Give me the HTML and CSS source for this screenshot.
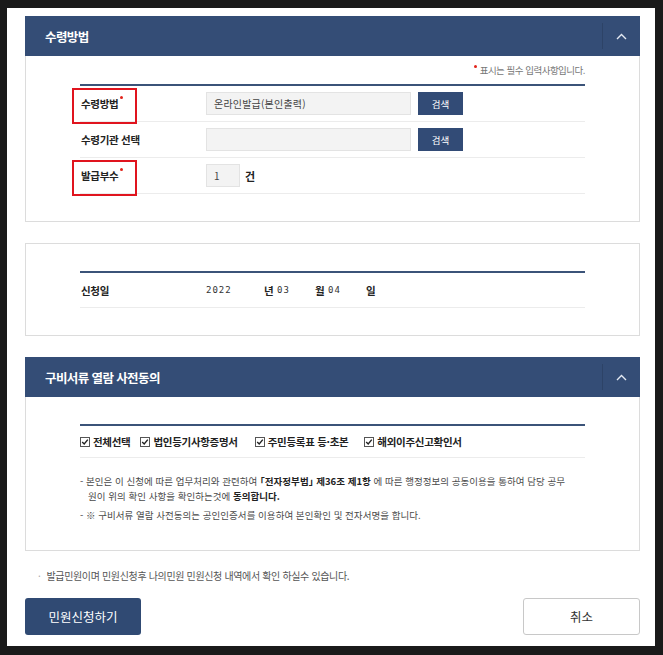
FILE: index.html
```html
<!DOCTYPE html>
<html lang="ko">
<head>
<meta charset="utf-8">
<title>민원신청</title>
<link rel="stylesheet" href="styles.css">
</head>
<body>
<div class="window">
  <section class="panel">
    <div class="panel-head">
      <h2 class="panel-title">수령방법</h2>
      <button class="toggle" type="button" aria-label="접기">
        <svg width="11" height="7" viewBox="0 0 11 7"><path d="M1 6 L5.5 1.5 L10 6" fill="none" stroke="#e4eaf3" stroke-width="1.4"/></svg>
      </button>
    </div>
    <div class="panel-body">
      <p class="req-note"><span class="dot"></span>표시는 필수 입력사항입니다.</p>
      <div class="table">
        <div class="row">
          <div class="row-label marked">수령방법<span class="dot"></span></div>
          <div class="field">온라인발급(본인출력)</div>
          <button class="btn-search" type="button">검색</button>
        </div>
        <div class="row">
          <div class="row-label">수령기관 선택</div>
          <div class="field"></div>
          <button class="btn-search" type="button">검색</button>
        </div>
        <div class="row">
          <div class="row-label marked">발급부수<span class="dot"></span></div>
          <div class="field small">1</div>
          <span class="unit">건</span>
        </div>
      </div>
    </div>
  </section>

  <section class="panel plain">
    <div class="panel-body date-body">
      <div class="table">
        <div class="row date-row">
          <div class="row-label">신청일</div>
          <span class="num year">2022</span><span class="du">년</span><span class="num">03</span><span class="du">월</span><span class="num">04</span><span class="du">일</span>
        </div>
      </div>
    </div>
  </section>

  <section class="panel">
    <div class="panel-head">
      <h2 class="panel-title">구비서류 열람 사전동의</h2>
      <button class="toggle" type="button" aria-label="접기">
        <svg width="11" height="7" viewBox="0 0 11 7"><path d="M1 6 L5.5 1.5 L10 6" fill="none" stroke="#e4eaf3" stroke-width="1.4"/></svg>
      </button>
    </div>
    <div class="panel-body consent-body">
      <div class="table">
        <div class="row checks">
          <label class="chk c1"><svg width="10" height="10" viewBox="0 0 10 10"><rect x="0.5" y="0.5" width="9" height="9" fill="#fff" stroke="#555"/><path d="M2.2 5 L4.2 7 L7.8 2.6" fill="none" stroke="#222" stroke-width="1.4"/></svg>전체선택</label>
          <label class="chk c2"><svg width="10" height="10" viewBox="0 0 10 10"><rect x="0.5" y="0.5" width="9" height="9" fill="#fff" stroke="#555"/><path d="M2.2 5 L4.2 7 L7.8 2.6" fill="none" stroke="#222" stroke-width="1.4"/></svg>법인등기사항증명서</label>
          <label class="chk c3"><svg width="10" height="10" viewBox="0 0 10 10"><rect x="0.5" y="0.5" width="9" height="9" fill="#fff" stroke="#555"/><path d="M2.2 5 L4.2 7 L7.8 2.6" fill="none" stroke="#222" stroke-width="1.4"/></svg>주민등록표 등·초본</label>
          <label class="chk c4"><svg width="10" height="10" viewBox="0 0 10 10"><rect x="0.5" y="0.5" width="9" height="9" fill="#fff" stroke="#555"/><path d="M2.2 5 L4.2 7 L7.8 2.6" fill="none" stroke="#222" stroke-width="1.4"/></svg>해외이주신고확인서</label>
        </div>
      </div>
      <ul class="notice">
        <li>- 본인은 이 신청에 따른 업무처리와 관련하여 <b>「전자정부법」 제36조 제1항</b> 에 따른 행정정보의 공동이용을 통하여 담당 공무<br>원이 위의 확인 사항을 확인하는것에 <b>동의합니다.</b></li>
        <li>- ※ 구비서류 열람 사전동의는 공인인증서를 이용하여 본인확인 및 전자서명을 합니다.</li>
      </ul>
    </div>
  </section>

  <p class="foot-note"><span class="bullet">·</span>발급민원이며 민원신청후 나의민원 민원신청 내역에서 확인 하실수 있습니다.</p>

  <div class="actions">
    <button class="btn-primary" type="button">민원신청하기</button>
    <button class="btn-cancel" type="button">취소</button>
  </div>
</div>
</body>
</html>
```
FILE: styles.css
```css
* { box-sizing: border-box; }
html, body { margin: 0; padding: 0; }
body {
  background: #1a1a1a;
  font-family: "Noto Sans CJK KR", "Noto Sans", sans-serif;
  color: #333;
}
.window {
  margin: 8px 8px 9px 7px;
  height: 638px;
  background: #fff;
  padding: 8px 15px 0 18px;
}
.panel + .panel { margin-top: 21px; }
.panel-head {
  height: 40px;
  background: #344d76;
  display: flex;
  align-items: center;
  justify-content: space-between;
}
.panel-title {
  margin: 0 0 0 20px;
  color: #fff;
  font-size: 12.5px;
  font-weight: 700;
  letter-spacing: -0.6px;
}
.toggle {
  width: 38px;
  height: 26px;
  border: 0;
  border-left: 1px solid rgba(0, 0, 0, 0.12);
  background: transparent;
  padding: 0;
  display: flex;
  align-items: center;
  justify-content: center;
}
.panel-body {
  border: 1px solid #dcdcdc;
  border-top: 0;
  padding: 0 54px 27px;
}
.plain .panel-body { border-top: 1px solid #dcdcdc; }
.req-note {
  margin: 0;
  height: 28px;
  display: flex;
  align-items: center;
  justify-content: flex-end;
  font-size: 9.5px;
  letter-spacing: -0.5px;
  color: #777;
}
.req-note .dot { margin-right: 3px; top: -4px; }
.dot {
  display: inline-block;
  width: 3px;
  height: 3px;
  border-radius: 50%;
  background: #e2231a;
  position: relative;
  top: -6px;
  margin-left: 2px;
}
.table { border-top: 2px solid #3b5379; }
.row {
  height: 36px;
  display: flex;
  align-items: center;
  border-bottom: 1px solid #ececec;
}
.row-label {
  width: 126px;
  flex: none;
  padding-left: 1px;
  font-size: 10.5px;
  font-weight: 700;
  letter-spacing: -0.3px;
  color: #222;
  position: relative;
  height: 100%;
  display: flex;
  align-items: center;
}
.row-label.marked::after {
  content: "";
  position: absolute;
  left: -8px;
  top: 2px;
  width: 61px;
  height: 32px;
  border: 2px solid #e0141e;
}
.field {
  width: 205px;
  height: 23px;
  background: #f3f3f3;
  border: 1px solid #e3e3e3;
  padding-left: 7px;
  display: flex;
  align-items: center;
  font-size: 10px;
  color: #444;
  letter-spacing: 0.2px;
}
.field.small { width: 34px; }
.unit {
  margin-left: 5px;
  font-size: 11px;
  font-weight: 700;
  color: #222;
}
.btn-search {
  margin-left: 7px;
  width: 45px;
  height: 23px;
  border: 0;
  background: #324b76;
  color: #fff;
  font-family: inherit;
  font-size: 9.5px;
  padding: 0;
}
.date-body { padding-top: 27px; }
.date-row { height: 35px; }
.num {
  font-family: "DejaVu Sans Mono", monospace;
  font-size: 9px;
  letter-spacing: 1px;
  color: #333;
  width: 38px;
}
.num.year { width: 58px; }
.du {
  width: 13px;
  font-size: 10.5px;
  font-weight: 700;
  color: #222;
}
.consent-body { padding-top: 27px; padding-bottom: 27px; }
.checks { height: 32px; }
.chk {
  display: flex;
  align-items: center;
  font-size: 10.5px;
  font-weight: 700;
  letter-spacing: -0.3px;
  color: #222;
}
.chk svg { margin-right: 3px; flex: none; }
.c1 { margin-right: 10px; }
.c2 { margin-right: 17px; }
.c3 { margin-right: 16px; }
.notice {
  list-style: none;
  margin: 16px 0 0;
  padding: 0;
  font-size: 9.5px;
  letter-spacing: 0.03px;
  color: #4a4a4a;
  line-height: 15px;
}
.notice li {
  padding-left: 8px;
  text-indent: -8px;
}
.notice li + li { margin-top: 4px; }
.notice b { color: #222; font-feature-settings: "halt"; }
.foot-note {
  margin: 18px 0 0 13px;
  font-size: 10px;
  letter-spacing: -0.35px;
  color: #555;
  line-height: 14px;
}
.bullet { color: #aaa; margin-right: 6px; }
.actions {
  margin-top: 15px;
  display: flex;
  justify-content: space-between;
}
.btn-primary, .btn-cancel {
  height: 37px;
  width: 117px;
  font-family: inherit;
  font-size: 12.5px;
  border-radius: 3px;
  padding: 0;
}
.btn-primary {
  width: 116px;
  background: #304a73;
  color: #fff;
  border: 0;
}
.btn-cancel {
  background: #fff;
  color: #333;
  border: 1px solid #c8c8c8;
}
```
